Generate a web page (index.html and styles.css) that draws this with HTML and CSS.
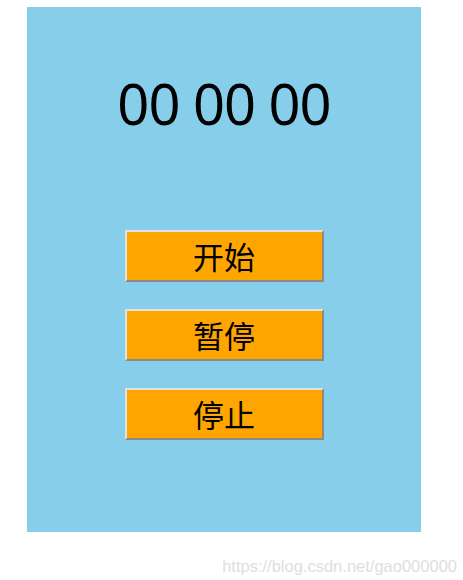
FILE: index.html
```html
<!DOCTYPE html>
<html lang="zh-CN">
<head>
<meta charset="utf-8">
<title>计时器</title>
<link rel="stylesheet" href="styles.css">
</head>
<body>
  <div class="page">
    <main class="stopwatch">
      <div class="time">00 00 00</div>
      <div class="controls">
        <button class="btn" type="button">开始</button>
        <button class="btn" type="button">暂停</button>
        <button class="btn" type="button">停止</button>
      </div>
    </main>
    <div class="credit">https://blog.csdn.net/gao000000</div>
  </div>
</body>
</html>
```

FILE: styles.css
```css
html, body {
  margin: 0;
  padding: 0;
  background: #ffffff;
}

.page {
  width: 463px;
  height: 580px;
  padding: 7px 0 0 27px;
  box-sizing: border-box;
  overflow: hidden;
}

.stopwatch {
  width: 394px;
  height: 525px;
  background: #87ceeb;
  display: flex;
  flex-direction: column;
  align-items: center;
  box-sizing: border-box;
  padding-top: 68px;
}

.time {
  font-family: "Noto Sans", "Liberation Sans", sans-serif;
  font-size: 56px;
  line-height: 56px;
  color: #000000;
  letter-spacing: -1px;
}

.controls {
  margin-top: 99px;
  display: flex;
  flex-direction: column;
  gap: 27px;
}

.btn {
  width: 199px;
  height: 52px;
  margin: 0;
  padding: 0;
  background: #ffa500;
  border: 2px solid;
  border-color: #e2e2e2 #8a8a8a #8a8a8a #e2e2e2;
  font-family: "Noto Sans CJK SC", "Noto Sans", sans-serif;
  font-size: 31px;
  line-height: 46px;
  color: #000000;
  cursor: pointer;
}

.credit {
  margin-top: 24px;
  padding-right: 6px;
  text-align: right;
  font-family: "Liberation Sans", Arial, sans-serif;
  font-size: 16.5px;
  line-height: 20px;
  color: #dedede;
}
```
